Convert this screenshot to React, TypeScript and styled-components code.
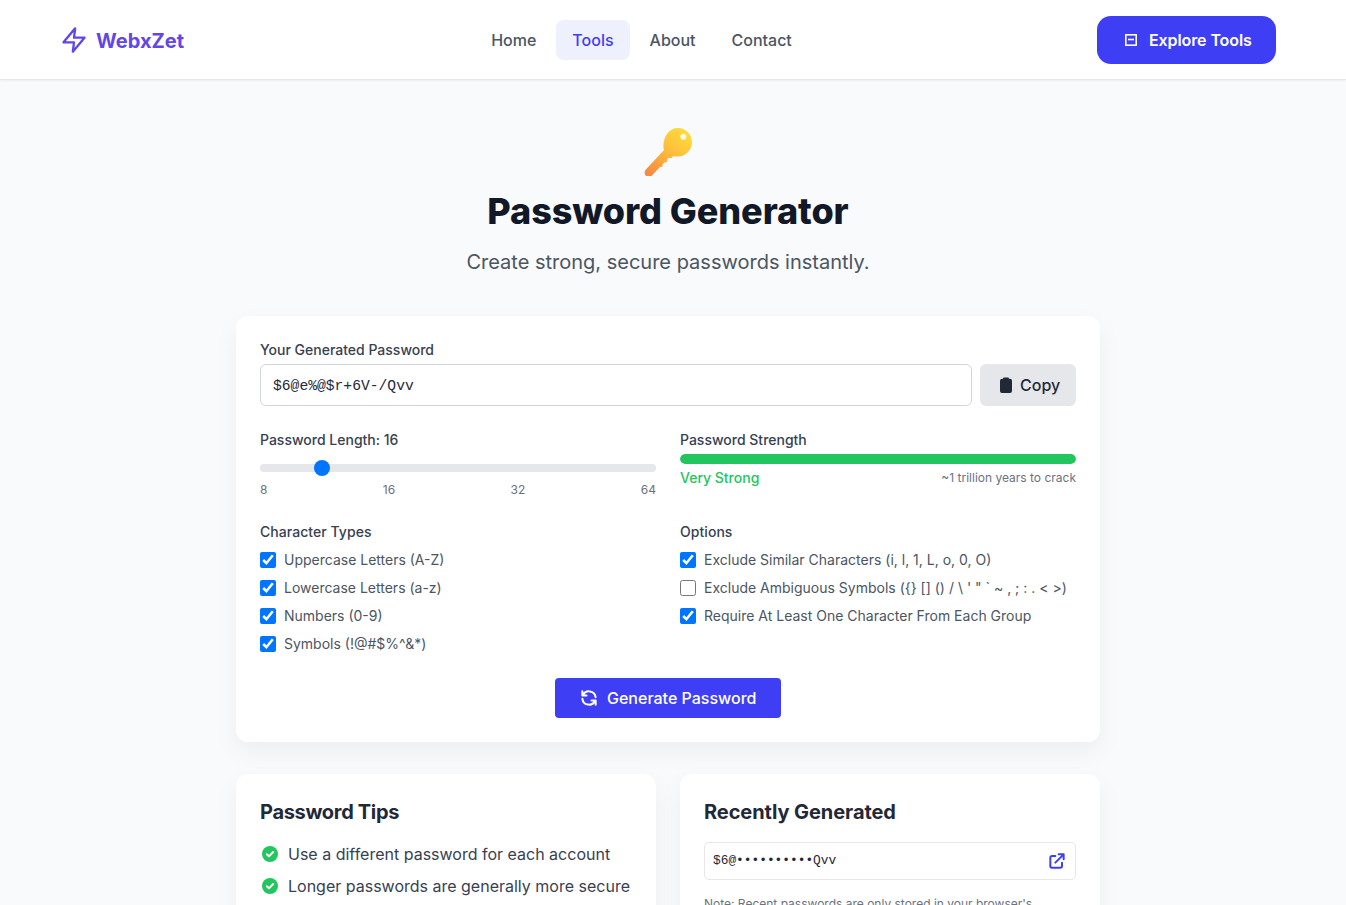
import React from 'react'
import styled, { createGlobalStyle } from 'styled-components'

const GlobalStyle = createGlobalStyle`
  html, body {
    margin: 0;
    height: 905px;
    overflow: hidden;
  }
  body {
    background: #f9fafc;
    font-family: Inter, "Noto Sans", sans-serif;
    color: #1f2937;
  }
  * {
    box-sizing: border-box;
  }
`

const Page = styled.div`
  width: 1346px;
  height: 905px;
  overflow: hidden;
`

const Header = styled.header`
  height: 80px;
  background: #fff;
  border-bottom: 1px solid #e5e7eb;
  box-shadow: 0 1px 2px rgba(0, 0, 0, 0.05);
`

const HeaderInner = styled.div`
  width: 1216px;
  height: 79px;
  margin-left: 60px;
  display: flex;
  justify-content: space-between;
  align-items: center;
`

const Logo = styled.a`
  display: flex;
  align-items: center;
  gap: 8px;
  color: #6246ea;
  font-size: 20px;
  font-weight: 700;
`

const LogoText = styled.span`
  padding-top: 2px;
`

const Nav = styled.nav`
  display: flex;
  align-items: center;
  gap: 4px;
  margin-left: 2px;
`

const NavLink = styled.a<{ $active?: boolean }>`
  padding: 10px 16px;
  border-radius: 8px;
  font-size: 16px;
  font-weight: 500;
  line-height: 20px;
  color: ${({ $active }) => ($active ? '#3e3ef5' : '#4b5563')};
  background: ${({ $active }) => ($active ? '#eef0fe' : 'transparent')};
`

const ExploreButton = styled.button`
  height: 48px;
  width: 179px;
  padding: 0 24px;
  display: flex;
  align-items: center;
  gap: 8px;
  border: none;
  border-radius: 14px;
  background: #3e3ef5;
  color: #fff;
  font-family: inherit;
  font-size: 16px;
  font-weight: 600;
  letter-spacing: -0.1px;
  white-space: nowrap;

  svg {
    flex: none;
  }
`

const Main = styled.main`
  width: 864px;
  margin-left: 236px;
  padding-top: 48px;
`

const Hero = styled.section`
  display: flex;
  flex-direction: column;
  align-items: center;
  margin-bottom: 40px;
`

const KeyIcon = styled.svg`
  display: block;
  width: 48px;
  height: 48px;
`

const Title = styled.h1`
  margin: 14px 0 0;
  font-size: 36px;
  line-height: 42px;
  font-weight: 800;
  letter-spacing: -0.08px;
  color: #111827;
`

const Subtitle = styled.p`
  margin: 16px 0 0;
  font-size: 20px;
  line-height: 28px;
  color: #4b5563;
`

const Card = styled.section`
  background: #fff;
  border-radius: 12px;
  padding: 24px;
  box-shadow: 0 10px 25px rgba(0, 0, 0, 0.05);
`

const FieldLabel = styled.div`
  font-size: 14px;
  line-height: 20px;
  font-weight: 500;
  color: #374151;
`

const OutputRow = styled.div`
  display: flex;
  gap: 8px;
  margin-top: 4px;
  margin-bottom: 24px;
`

const PasswordInput = styled.input`
  flex: 1;
  min-width: 0;
  height: 42px;
  padding: 2px 12px 0;
  border: 1px solid #d1d5db;
  border-radius: 6px;
  background: #fff;
  font-family: "Liberation Mono", monospace;
  font-size: 14.67px;
  color: #1f2937;
`

const CopyButton = styled.button`
  height: 42px;
  width: 96px;
  padding: 0 0 0 20px;
  display: flex;
  align-items: center;
  gap: 8px;
  border: none;
  border-radius: 6px;
  background: #e5e7eb;
  color: #1f2937;
  font-family: inherit;
  font-size: 16px;
  font-weight: 500;
`

const TwoColumns = styled.div`
  display: grid;
  grid-template-columns: 396px 396px;
  gap: 24px;
  margin-bottom: 24px;
`

const Slider = styled.input`
  display: block;
  width: 100%;
  height: 8px;
  margin: 14px 0 0;
  appearance: none;
  background: #e5e7eb;
  border-radius: 8px;

  &::-webkit-slider-thumb {
    appearance: none;
    width: 16px;
    height: 16px;
    border-radius: 50%;
    background: #0075ff;
  }
`

const Scale = styled.div`
  display: flex;
  justify-content: space-between;
  margin-top: 10px;
  font-size: 12px;
  line-height: 16px;
  color: #6b7280;
`

const StrengthTrack = styled.div`
  height: 10px;
  margin-top: 4px;
  background: #e5e7eb;
  border-radius: 8px;
  overflow: hidden;
`

const StrengthFill = styled.div`
  height: 100%;
  background: #22c55e;
  border-radius: 8px;
`

const StrengthMeta = styled.div`
  display: flex;
  justify-content: space-between;
  align-items: center;
  margin-top: 4px;
`

const StrengthText = styled.span`
  font-size: 14px;
  line-height: 20px;
  font-weight: 500;
  color: #22c55e;
`

const CrackTime = styled.span`
  font-size: 12px;
  line-height: 16px;
  color: #6b7280;
`

const GroupTitle = styled.h3`
  margin: 0 0 8px;
  font-size: 14px;
  line-height: 20px;
  font-weight: 500;
  letter-spacing: 0.05px;
  color: #374151;
`

const CheckList = styled.div`
  display: flex;
  flex-direction: column;
  gap: 8px;
`

const CheckRow = styled.label`
  display: flex;
  align-items: center;
  gap: 8px;
  height: 20px;
  font-size: 14px;
  line-height: 20px;
  color: #4b5563;
`

const CheckBox = styled.input`
  width: 16px;
  height: 16px;
  margin: 0;
  accent-color: #0075ff;
`

const GenerateRow = styled.div`
  display: flex;
  justify-content: center;
`

const GenerateButton = styled.button`
  height: 40px;
  width: 226px;
  padding: 0 24px;
  display: flex;
  align-items: center;
  gap: 8px;
  border: none;
  border-radius: 4px;
  background: #3e3ef5;
  color: #fff;
  font-family: inherit;
  font-size: 16px;
  font-weight: 500;
  white-space: nowrap;
`

const LowerGrid = styled.div`
  display: grid;
  grid-template-columns: 420px 420px;
  gap: 24px;
  margin-top: 32px;
`

const CardTitle = styled.h2<{ $tracking: number }>`
  margin: 0 0 16px;
  font-size: 20px;
  line-height: 28px;
  font-weight: 700;
  letter-spacing: ${({ $tracking }) => $tracking}px;
  color: #1f2937;
`

const TipList = styled.ul`
  list-style: none;
  margin: 0;
  padding: 0;
  display: flex;
  flex-direction: column;
  gap: 8px;
`

const TipItem = styled.li`
  display: flex;
  align-items: center;
  gap: 8px;
  font-size: 16px;
  line-height: 24px;
  color: #374151;
`

const RecentRow = styled.div`
  height: 38px;
  padding: 0 8px;
  display: flex;
  align-items: center;
  justify-content: space-between;
  border: 1px solid #e5e7eb;
  border-radius: 5px;
`

const RecentValue = styled.span`
  font-family: "Liberation Mono", monospace;
  font-size: 12.83px;
  line-height: 16px;
  color: #1f2937;
`

const Note = styled.p`
  margin: 16px 0 0;
  font-size: 12px;
  line-height: 16px;
  color: #6b7280;
`

const BoltIcon = () => (
  <svg width="28" height="28" viewBox="0 0 24 24" fill="none" stroke="#6246ea" strokeWidth="2" strokeLinejoin="round">
    <polygon points="13 2 3 14 12 14 11 22 21 10 12 10 13 2" />
  </svg>
)

const BoardIcon = () => (
  <svg width="20" height="20" viewBox="0 0 20 20" fill="none" stroke="#fff" strokeWidth="1.6">
    <rect x="4.8" y="4.8" width="10.4" height="10.4" />
    <path d="M7 9.5h6" />
  </svg>
)

const ClipboardIcon = () => (
  <svg width="12" height="16" viewBox="0 0 12 16">
    <path
      fill="#1f2937"
      d="M3.5.4h5l.4 1.3H10a2 2 0 0 1 2 2V14a2 2 0 0 1-2 2H2a2 2 0 0 1-2-2V3.7a2 2 0 0 1 2-2h1.1z"
    />
  </svg>
)

const RefreshIcon = () => (
  <svg width="20" height="20" viewBox="0 0 24 24" fill="none" stroke="#fff" strokeWidth="2.4" strokeLinecap="round" strokeLinejoin="round">
    <path d="M4 4v5h.582m15.356 2A8.001 8.001 0 004.582 9m0 0H9m11 11v-5h-.581m0 0a8.003 8.003 0 01-15.357-2m15.357 2H15" />
  </svg>
)

const TipCheck = () => (
  <svg width="20" height="20" viewBox="0 0 20 20">
    <circle cx="10" cy="10" r="8" fill="#22c55e" />
    <path d="M6.8 10.2l2.2 2.2 4.2-4.4" fill="none" stroke="#fff" strokeWidth="2" strokeLinecap="round" strokeLinejoin="round" />
  </svg>
)

const ExternalIcon = () => (
  <svg width="20" height="20" viewBox="0 0 24 24" fill="none" stroke="#3e3ef5" strokeWidth="2.4" strokeLinecap="round" strokeLinejoin="round">
    <path d="M10 6H6a2 2 0 00-2 2v10a2 2 0 002 2h10a2 2 0 002-2v-4M14 4h6m0 0v6m0-6L10 14" />
  </svg>
)

const Key = () => (
  <KeyIcon viewBox="0 0 48 48">
    <defs>
      <linearGradient id="keyFill" gradientUnits="userSpaceOnUse" x1="40" y1="4" x2="6" y2="46">
        <stop offset="0" stopColor="#ffd93a" />
        <stop offset="0.5" stopColor="#fdb93c" />
        <stop offset="1" stopColor="#f58a42" />
      </linearGradient>
    </defs>
    <path
      fill="url(#keyFill)"
      d="M33.7 0C41.6 0 48 6.4 48 14.3S41.6 28.6 33.7 28.6c-1.5 0-2.9-.2-4.2-.6l-2.3 2.2-2.4-.4-1.8 2-.1 2.4-2.6.2-1.8 2-.1 2.3-2.4.3-7.8 8.3c-1.8 1.9-4.6 2-6.3.4s-1.8-4.4 0-6.3L20 22c-.4-1.3-.6-2.5-.6-3.9C19.4 8 25.8 0 33.7 0z"
    />
    <circle cx="39.3" cy="8.7" r="3" fill="#fff9e3" />
  </KeyIcon>
)

const characterTypes = ['Uppercase Letters (A-Z)', 'Lowercase Letters (a-z)', 'Numbers (0-9)', 'Symbols (!@#$%^&*)']

const options = [
  { label: 'Exclude Similar Characters (i, l, 1, L, o, 0, O)', checked: true },
  { label: 'Exclude Ambiguous Symbols ({} [] () / \\ \' " ` ~ , ; : . < >)', checked: false },
  { label: 'Require At Least One Character From Each Group', checked: true },
]

const App: React.FC = () => (
  <Page>
    <GlobalStyle />
    <Header>
      <HeaderInner>
        <Logo>
          <BoltIcon />
          <LogoText>WebxZet</LogoText>
        </Logo>
        <Nav>
          <NavLink>Home</NavLink>
          <NavLink $active>Tools</NavLink>
          <NavLink>About</NavLink>
          <NavLink>Contact</NavLink>
        </Nav>
        <ExploreButton>
          <BoardIcon />
          Explore Tools
        </ExploreButton>
      </HeaderInner>
    </Header>
    <Main>
      <Hero>
        <Key />
        <Title>Password Generator</Title>
        <Subtitle>Create strong, secure passwords instantly.</Subtitle>
      </Hero>
      <Card>
        <FieldLabel>Your Generated Password</FieldLabel>
        <OutputRow>
          <PasswordInput readOnly value="$6@e%@$r+6V-/Qvv" />
          <CopyButton>
            <ClipboardIcon />
            Copy
          </CopyButton>
        </OutputRow>
        <TwoColumns>
          <div>
            <FieldLabel>Password Length: 16</FieldLabel>
            <Slider type="range" min={8} max={64} defaultValue={16} />
            <Scale>
              <span>8</span>
              <span>16</span>
              <span>32</span>
              <span>64</span>
            </Scale>
          </div>
          <div>
            <FieldLabel>Password Strength</FieldLabel>
            <StrengthTrack>
              <StrengthFill style={{ width: '100%' }} />
            </StrengthTrack>
            <StrengthMeta>
              <StrengthText>Very Strong</StrengthText>
              <CrackTime>~1 trillion years to crack</CrackTime>
            </StrengthMeta>
          </div>
        </TwoColumns>
        <TwoColumns>
          <div>
            <GroupTitle>Character Types</GroupTitle>
            <CheckList>
              {characterTypes.map((label) => (
                <CheckRow key={label}>
                  <CheckBox type="checkbox" defaultChecked />
                  {label}
                </CheckRow>
              ))}
            </CheckList>
          </div>
          <div>
            <GroupTitle>Options</GroupTitle>
            <CheckList>
              {options.map((option) => (
                <CheckRow key={option.label}>
                  <CheckBox type="checkbox" defaultChecked={option.checked} />
                  {option.label}
                </CheckRow>
              ))}
            </CheckList>
          </div>
        </TwoColumns>
        <GenerateRow>
          <GenerateButton>
            <RefreshIcon />
            Generate Password
          </GenerateButton>
        </GenerateRow>
      </Card>
      <LowerGrid>
        <Card>
          <CardTitle $tracking={-0.32}>Password Tips</CardTitle>
          <TipList>
            <TipItem>
              <TipCheck />
              Use a different password for each account
            </TipItem>
            <TipItem>
              <TipCheck />
              Longer passwords are generally more secure
            </TipItem>
          </TipList>
        </Card>
        <Card>
          <CardTitle $tracking={-0.07}>Recently Generated</CardTitle>
          <RecentRow>
            <RecentValue>$6@••••••••••Qvv</RecentValue>
            <ExternalIcon />
          </RecentRow>
          <Note>Note: Recent passwords are only stored in your browser's</Note>
        </Card>
      </LowerGrid>
    </Main>
  </Page>
)

export default App
